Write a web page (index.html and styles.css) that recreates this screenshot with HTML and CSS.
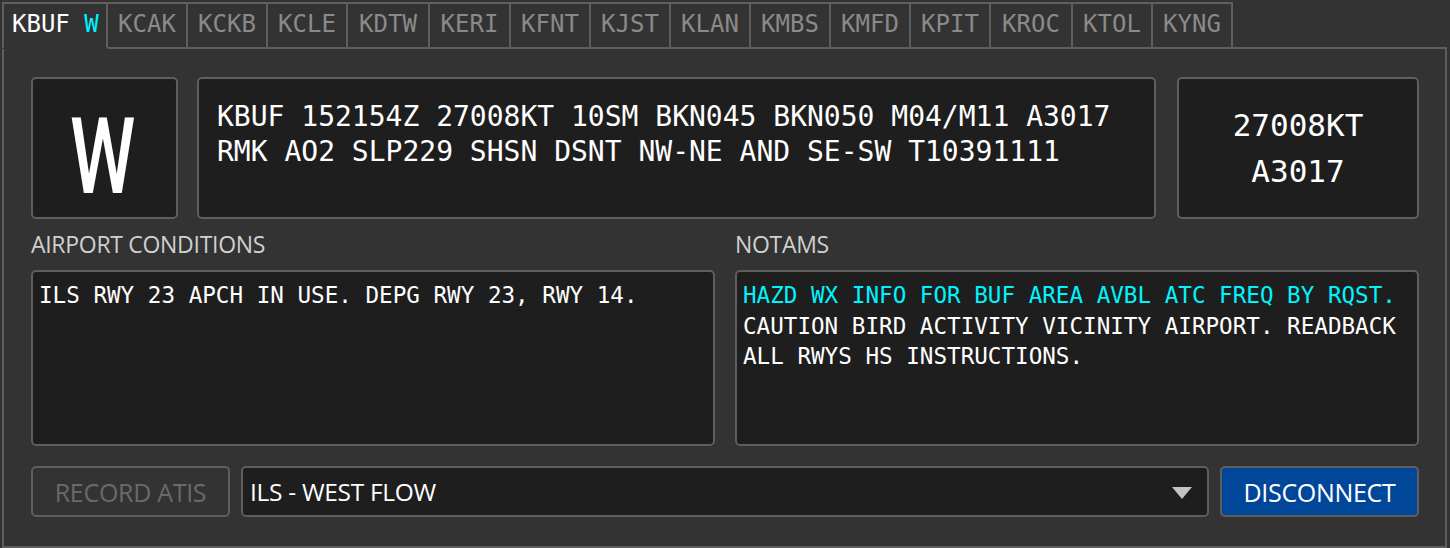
FILE: index.html
```html
<!DOCTYPE html>
<html>
<head>
<meta charset="utf-8">
<link rel="stylesheet" href="styles.css">
</head>
<body>
<div class="tabs">
  <div class="tab active"><span>KBUF&nbsp;<span class="cyan">W</span></span></div>
  <div class="tab">KCAK</div>
  <div class="tab">KCKB</div>
  <div class="tab">KCLE</div>
  <div class="tab">KDTW</div>
  <div class="tab">KERI</div>
  <div class="tab">KFNT</div>
  <div class="tab">KJST</div>
  <div class="tab">KLAN</div>
  <div class="tab">KMBS</div>
  <div class="tab">KMFD</div>
  <div class="tab">KPIT</div>
  <div class="tab">KROC</div>
  <div class="tab">KTOL</div>
  <div class="tab">KYNG</div>
  <div class="tab-fill"></div>
</div>
<div class="panel">
  <div class="row-top">
    <div class="box code"><span class="code-letter">W</span></div>
    <div class="box metar">KBUF 152154Z 27008KT 10SM BKN045 BKN050 M04/M11 A3017<br>RMK AO2 SLP229 SHSN DSNT NW-NE AND SE-SW T10391111</div>
    <div class="box wind"><div>27008KT</div><div>A3017</div></div>
  </div>
  <div class="row-mid">
    <div class="col">
      <div class="label">AIRPORT CONDITIONS</div>
      <div class="box textbox">ILS RWY 23 APCH IN USE. DEPG RWY 23, RWY 14.</div>
    </div>
    <div class="col">
      <div class="label">NOTAMS</div>
      <div class="box textbox"><span class="cyan">HAZD WX INFO FOR BUF AREA AVBL ATC FREQ BY RQST.</span><br>CAUTION BIRD ACTIVITY VICINITY AIRPORT. READBACK<br>ALL RWYS HS INSTRUCTIONS.</div>
    </div>
  </div>
  <div class="row-bottom">
    <div class="btn btn-disabled">RECORD ATIS</div>
    <div class="select">
      <span>ILS - WEST FLOW</span>
      <svg class="caret" width="20" height="12" viewBox="0 0 20 12"><polygon points="0,0 20,0 10,12" fill="#c4c4c4"/></svg>
    </div>
    <div class="btn btn-primary">DISCONNECT</div>
  </div>
</div>
</body>
</html>
```

FILE: styles.css
```css
* { box-sizing: border-box; }
html, body { margin: 0; background: #333333; }
body {
  padding: 2px 3px 0 2px;
  width: 1450px;
  height: 548px;
  overflow: hidden;
}
.cyan { color: #00f4ff; }

.tabs {
  display: flex;
  height: 47px;
}
.tab {
  font-family: "DejaVu Sans Mono", monospace;
  font-size: 24px;
  color: #8a8a8a;
  width: 80px;
  border-top: 2px solid #5e5e5e;
  border-right: 2px solid #5e5e5e;
  border-bottom: 2px solid #5e5e5e;
  display: flex;
  align-items: center;
  justify-content: center;
  padding-bottom: 3px;
}
.tab.active {
  width: 106px;
  color: #ffffff;
  border-left: 2px solid #5e5e5e;
  border-bottom: 2px solid transparent;
  justify-content: flex-start;
  padding-left: 8px;
}
.tab:nth-child(5), .tab:nth-child(13) { width: 82px; }
.tab:nth-child(6) { width: 81px; }
.tab-fill {
  flex: 1;
  border-bottom: 2px solid #5e5e5e;
}

.panel {
  height: 499px;
  border: 2px solid #5e5e5e;
  border-top: none;
  padding: 28px 26px 0 27px;
}

.box {
  background: #1e1e1e;
  border: 2px solid #5e5e5e;
  border-radius: 5px;
}

.row-top {
  display: flex;
  height: 142px;
}
.code {
  width: 147px;
  margin-right: 19px;
  display: flex;
  align-items: center;
  justify-content: center;
  padding-top: 18px;
  padding-right: 4px;
}
.code-letter {
  font-family: Roboto, "Liberation Sans", sans-serif;
  font-weight: 500;
  font-size: 106px;
  color: #ffffff;
  display: inline-block;
  transform: scaleX(0.7);
  line-height: 1;
}
.metar {
  flex: 1;
  font-family: "DejaVu Sans Mono", monospace;
  font-size: 28px;
  line-height: 35px;
  color: #ffffff;
  padding: 20px 18px;
  white-space: nowrap;
}
.wind {
  width: 242px;
  margin-left: 21px;
  font-family: "DejaVu Sans Mono", monospace;
  font-size: 31px;
  line-height: 46px;
  color: #ffffff;
  display: flex;
  flex-direction: column;
  align-items: center;
  justify-content: center;
}

.row-mid {
  display: grid;
  grid-template-columns: 1fr 1fr;
  gap: 20px;
}
.label {
  font-family: "Open Sans", sans-serif;
  font-size: 23px;
  line-height: 26px;
  color: #d0d0d0;
  margin: 12px 0 13px;
  letter-spacing: -0.3px;
}
.textbox {
  height: 176px;
  font-family: "DejaVu Sans Mono", monospace;
  font-size: 22.6px;
  line-height: 30.5px;
  color: #ffffff;
  padding: 8px 6px;
  white-space: nowrap;
}

.row-bottom {
  display: flex;
  gap: 11px;
  height: 51px;
  margin-top: 20px;
}
.btn {
  width: 199px;
  border: 2px solid #5e5e5e;
  border-radius: 5px;
  display: flex;
  align-items: center;
  justify-content: center;
  font-family: "Open Sans", sans-serif;
  font-size: 25px;
  letter-spacing: -0.3px;
}
.btn-disabled {
  color: #6a6a6a;
  background: #333333;
}
.btn-primary {
  color: #ffffff;
  background: #00479a;
}
.select {
  flex: 1;
  background: #1e1e1e;
  border: 2px solid #5e5e5e;
  border-radius: 5px;
  display: flex;
  align-items: center;
  justify-content: space-between;
  padding: 0 15px 0 7px;
  font-family: "Open Sans", sans-serif;
  font-size: 24.5px;
  letter-spacing: -0.3px;
  color: #ffffff;
}
.caret { display: block; margin-top: 2px; }
```
